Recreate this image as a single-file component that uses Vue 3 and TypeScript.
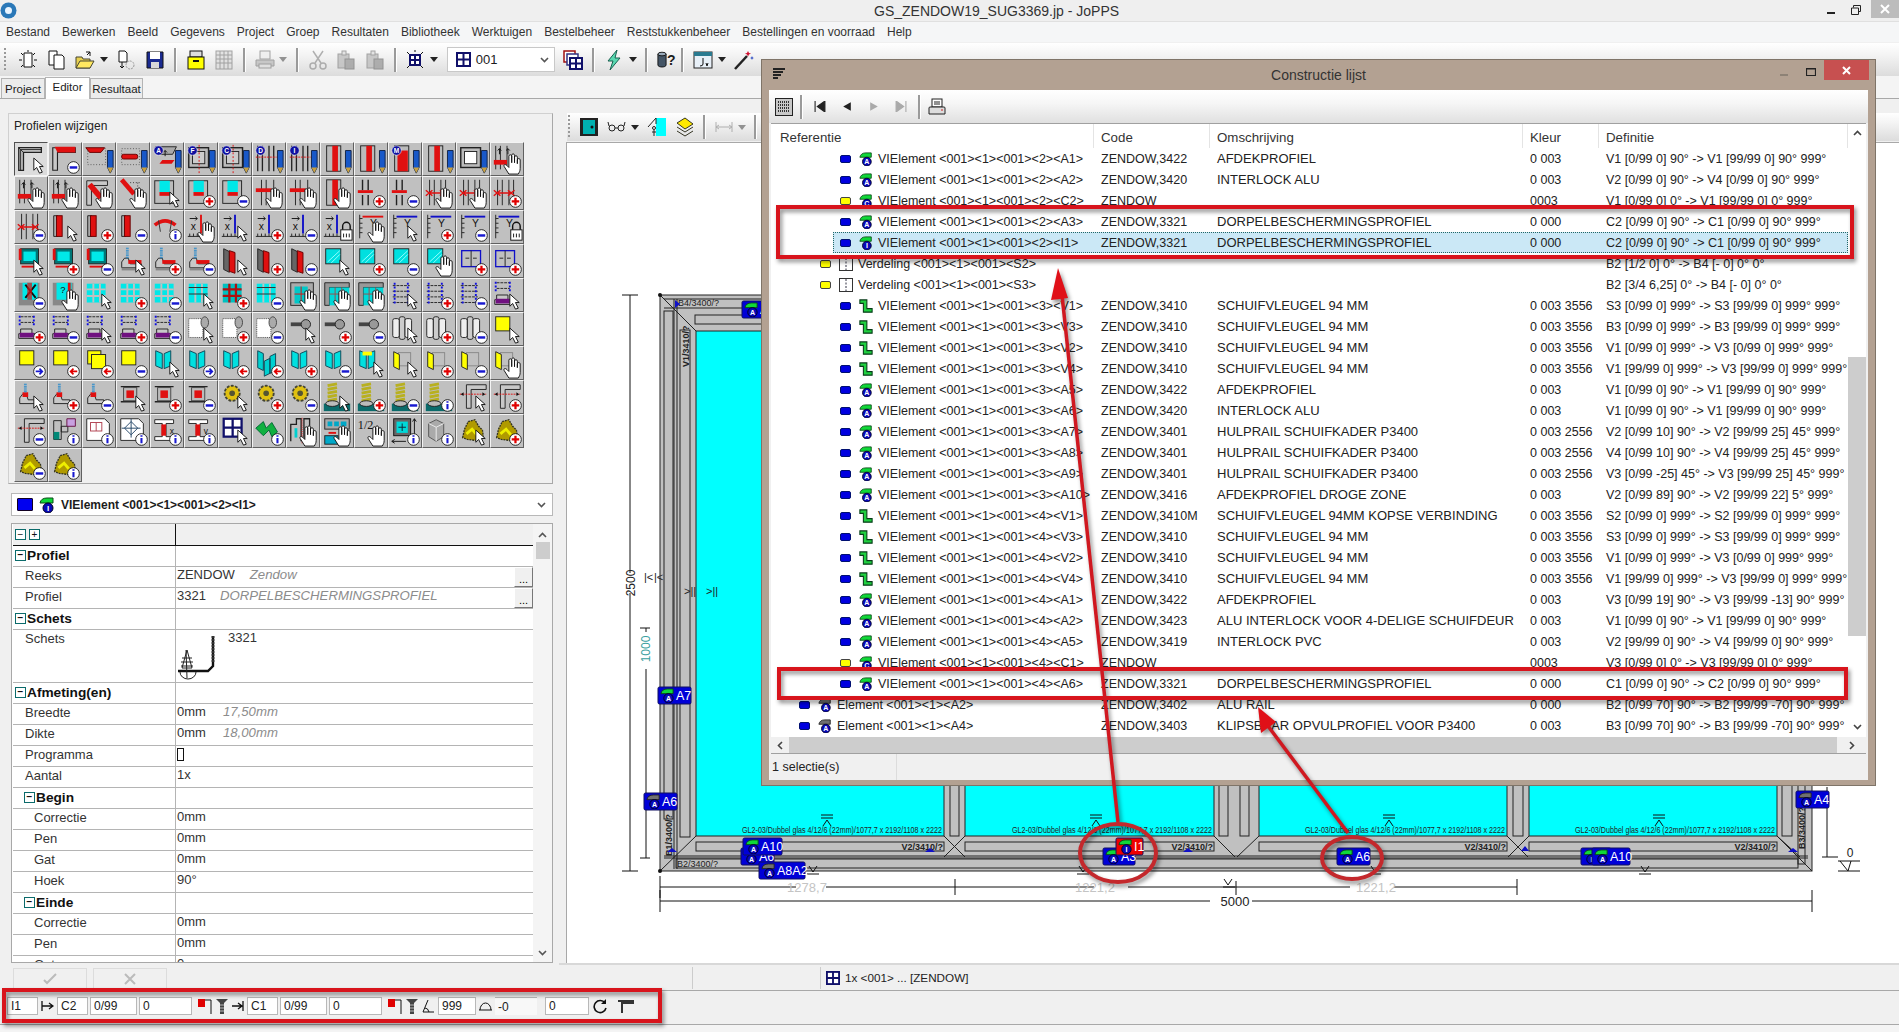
<script setup lang="ts">
// JoPPS editor with the floating "Constructie lijst" window on top

const menu = ['Bestand', 'Bewerken', 'Beeld', 'Gegevens', 'Project', 'Groep', 'Resultaten', 'Bibliotheek', 'Werktuigen', 'Bestelbeheer', 'Reststukkenbeheer', 'Bestellingen en voorraad', 'Help']

// base.overlay.letter per button of the profile palette
const tools = `
corner.cur cRed.minus topRed.pen midRed.pen aRed.pen.A frame.pen.F frame.pen.C pair.pen.D pair.pen.I col.pen col.pen colM.pen.M col.pen frameW.pen pairRed.hand
pairRed.hand pairRed.hand diag.hand diagS.hand glassBox.cur glassBox.plus glassBox.minus cross.hand cross.hand col.hand barT.plus barT.minus xRed.hand xRed.hand xRed.plus
xRed.minus redCol.cur redCol.plus redCol.minus arc.info rulXR.hand rulXB.cur rulXB.plus rulXB.minus rulXB.lock rulYR.hand rulYB.cur rulYB.plus rulYB.minus rulYB.lock
glassFr.cur glassFr.plus glassFr.minus sill.cur sill.plus sill.minus redCols.cur redCols.plus redCols.minus cyan.cur cyan.plus cyan.minus cyan.hand leafB.plus leafB.plus
xglass.minus qglass.hand grid.cur grid.plus grid.minus gridBar.cur gridRed.plus gridBar.minus frGrid.hand corGrid.hand corGrid.hand lines.cur lines.plus lines.minus linesP.cur
linesP.plus linesP.minus linesP.cur linesP.plus linesP.minus roll.cur roll.plus roll.minus handle.cur handle.plus handle.minus hinge.cur hinge.plus hinge.minus yellow.cur
yellow.arrR yellow.arrL yellow2.arrL yellow.minus leaf.cur leaf.arrR leaf.arrL leaf2.arrL leaf.plus leaf.minus leafY.cur door.cur door.plus door.minus door.hand
sillS.cur sillS.plus sillS.minus redBox.cur redBox.plus redBox.minus gear.cur gear.plus gear.minus screw.cur screw.plus screw.minus screw.info cornerD.cur cornerD.plus
cornerD.minus hw.info plan.info plan2.info beamX.info beamY.info window.cur zig.info pairTall.hand panel.hand half.hand frArrow.info cyl.info gold.cur gold.plus
gold.minus gold.info`
  .trim()
  .split(/\s+/)
  .map(s => {
    const [base, over, letter] = s.split('.')
    return { base, over, letter }
  })

interface Prop {
  label: string
  head?: boolean
  sub?: boolean
  value?: string
  note?: string
  noteGap?: number
  btn?: boolean
  sketch?: boolean
  box?: boolean
}

const props: Prop[] = [
  { label: 'Profiel', head: true },
  { label: 'Reeks', value: 'ZENDOW', note: 'Zendow', noteGap: 15, btn: true },
  { label: 'Profiel', value: '3321', note: 'DORPELBESCHERMINGSPROFIEL', noteGap: 14, btn: true },
  { label: 'Schets', head: true },
  { label: 'Schets', sketch: true },
  { label: 'Afmeting(en)', head: true },
  { label: 'Breedte', value: '0mm', note: '17,50mm', noteGap: 17 },
  { label: 'Dikte', value: '0mm', note: '18,00mm', noteGap: 17 },
  { label: 'Programma', box: true },
  { label: 'Aantal', value: '1x' },
  { label: 'Begin', head: true, sub: true },
  { label: 'Correctie', sub: true, value: '0mm' },
  { label: 'Pen', sub: true, value: '0mm' },
  { label: 'Gat', sub: true, value: '0mm' },
  { label: 'Hoek', sub: true, value: '90°' },
  { label: 'Einde', head: true, sub: true },
  { label: 'Correctie', sub: true, value: '0mm' },
  { label: 'Pen', sub: true, value: '0mm' },
  { label: 'Gat', sub: true, value: '0' },
]

interface Row {
  level: number
  dot: 'blue' | 'yellow'
  icon: string
  ref: string
  code?: string
  desc?: string
  kleur?: string
  def: string
  sel?: boolean
}

const vi = (tail: string) => 'VIElement <001><1><001>' + tail
const dorpel = 'DORPELBESCHERMINGSPROFIEL'
const sv = 'SCHUIFVLEUGEL 94 MM'
const hr = 'HULPRAIL SCHUIFKADER P3400'

const rows: Row[] = [
  { level: 3, dot: 'blue', icon: 'A', ref: vi('<2><A1>'), code: 'ZENDOW,3422', desc: 'AFDEKPROFIEL', kleur: '0 003', def: 'V1 [0/99 0] 90° -> V1 [99/99 0] 90° 999°' },
  { level: 3, dot: 'blue', icon: 'A', ref: vi('<2><A2>'), code: 'ZENDOW,3420', desc: 'INTERLOCK ALU', kleur: '0 003', def: 'V2 [0/99 0] 90° -> V4 [0/99 0] 90° 999°' },
  { level: 3, dot: 'yellow', icon: 'C', ref: vi('<2><C2>'), code: 'ZENDOW', kleur: '0003', def: 'V1 [0/99 0] 0° -> V1 [99/99 0] 0° 999°' },
  { level: 3, dot: 'blue', icon: 'A', ref: vi('<2><A3>'), code: 'ZENDOW,3321', desc: dorpel, kleur: '0 000', def: 'C2 [0/99 0] 90° -> C1 [0/99 0] 90° 999°' },
  { level: 3, dot: 'blue', icon: 'I', ref: vi('<2><I1>'), code: 'ZENDOW,3321', desc: dorpel, kleur: '0 000', def: 'C2 [0/99 0] 90° -> C1 [0/99 0] 90° 999°', sel: true },
  { level: 2, dot: 'yellow', icon: 'box', ref: 'Verdeling <001><1><001><S2>', def: 'B2 [1/2 0] 0° -> B4 [- 0] 0° 0°' },
  { level: 2, dot: 'yellow', icon: 'box', ref: 'Verdeling <001><1><001><S3>', def: 'B2 [3/4 6,25] 0° -> B4 [- 0] 0° 0°' },
  { level: 3, dot: 'blue', icon: 'Z', ref: vi('<3><V1>'), code: 'ZENDOW,3410', desc: sv, kleur: '0 003 3556', def: 'S3 [0/99 0] 999° -> S3 [99/99 0] 999° 999°' },
  { level: 3, dot: 'blue', icon: 'Z', ref: vi('<3><V3>'), code: 'ZENDOW,3410', desc: sv, kleur: '0 003 3556', def: 'B3 [0/99 0] 999° -> B3 [99/99 0] 999° 999°' },
  { level: 3, dot: 'blue', icon: 'Z', ref: vi('<3><V2>'), code: 'ZENDOW,3410', desc: sv, kleur: '0 003 3556', def: 'V1 [0/99 0] 999° -> V3 [0/99 0] 999° 999°' },
  { level: 3, dot: 'blue', icon: 'Z', ref: vi('<3><V4>'), code: 'ZENDOW,3410', desc: sv, kleur: '0 003 3556', def: 'V1 [99/99 0] 999° -> V3 [99/99 0] 999° 999°' },
  { level: 3, dot: 'blue', icon: 'A', ref: vi('<3><A5>'), code: 'ZENDOW,3422', desc: 'AFDEKPROFIEL', kleur: '0 003', def: 'V1 [0/99 0] 90° -> V1 [99/99 0] 90° 999°' },
  { level: 3, dot: 'blue', icon: 'A', ref: vi('<3><A6>'), code: 'ZENDOW,3420', desc: 'INTERLOCK ALU', kleur: '0 003', def: 'V1 [0/99 0] 90° -> V1 [99/99 0] 90° 999°' },
  { level: 3, dot: 'blue', icon: 'A', ref: vi('<3><A7>'), code: 'ZENDOW,3401', desc: hr, kleur: '0 003 2556', def: 'V2 [0/99 10] 90° -> V2 [99/99 25] 45° 999°' },
  { level: 3, dot: 'blue', icon: 'A', ref: vi('<3><A8>'), code: 'ZENDOW,3401', desc: hr, kleur: '0 003 2556', def: 'V4 [0/99 10] 90° -> V4 [99/99 25] 45° 999°' },
  { level: 3, dot: 'blue', icon: 'A', ref: vi('<3><A9>'), code: 'ZENDOW,3401', desc: hr, kleur: '0 003 2556', def: 'V3 [0/99 -25] 45° -> V3 [99/99 25] 45° 999°' },
  { level: 3, dot: 'blue', icon: 'A', ref: vi('<3><A10>'), code: 'ZENDOW,3416', desc: 'AFDEKPROFIEL DROGE ZONE', kleur: '0 003', def: 'V2 [0/99 89] 90° -> V2 [99/99 22] 5° 999°' },
  { level: 3, dot: 'blue', icon: 'Z', ref: vi('<4><V1>'), code: 'ZENDOW,3410M', desc: 'SCHUIFVLEUGEL 94MM KOPSE VERBINDING', kleur: '0 003 3556', def: 'S2 [0/99 0] 999° -> S2 [99/99 0] 999° 999°' },
  { level: 3, dot: 'blue', icon: 'Z', ref: vi('<4><V3>'), code: 'ZENDOW,3410', desc: sv, kleur: '0 003 3556', def: 'S3 [0/99 0] 999° -> S3 [99/99 0] 999° 999°' },
  { level: 3, dot: 'blue', icon: 'Z', ref: vi('<4><V2>'), code: 'ZENDOW,3410', desc: sv, kleur: '0 003 3556', def: 'V1 [0/99 0] 999° -> V3 [0/99 0] 999° 999°' },
  { level: 3, dot: 'blue', icon: 'Z', ref: vi('<4><V4>'), code: 'ZENDOW,3410', desc: sv, kleur: '0 003 3556', def: 'V1 [99/99 0] 999° -> V3 [99/99 0] 999° 999°' },
  { level: 3, dot: 'blue', icon: 'A', ref: vi('<4><A1>'), code: 'ZENDOW,3422', desc: 'AFDEKPROFIEL', kleur: '0 003', def: 'V3 [0/99 19] 90° -> V3 [99/99 -13] 90° 999°' },
  { level: 3, dot: 'blue', icon: 'A', ref: vi('<4><A2>'), code: 'ZENDOW,3423', desc: 'ALU INTERLOCK VOOR 4-DELIGE SCHUIFDEUR', kleur: '0 003', def: 'V1 [0/99 0] 90° -> V1 [99/99 0] 90° 999°' },
  { level: 3, dot: 'blue', icon: 'A', ref: vi('<4><A5>'), code: 'ZENDOW,3419', desc: 'INTERLOCK PVC', kleur: '0 003', def: 'V2 [99/99 0] 90° -> V4 [99/99 0] 90° 999°' },
  { level: 3, dot: 'yellow', icon: 'C', ref: vi('<4><C1>'), code: 'ZENDOW', kleur: '0003', def: 'V3 [0/99 0] 0° -> V3 [99/99 0] 0° 999°' },
  { level: 3, dot: 'blue', icon: 'A', ref: vi('<4><A6>'), code: 'ZENDOW,3321', desc: dorpel, kleur: '0 000', def: 'C1 [0/99 0] 90° -> C2 [0/99 0] 90° 999°' },
  { level: 1, dot: 'blue', icon: 'E', ref: 'Element <001><1><A2>', code: 'ZENDOW,3402', desc: 'ALU RAIL', kleur: '0 000', def: 'B2 [0/99 70] 90° -> B2 [99/99 -70] 90° 999°' },
  { level: 1, dot: 'blue', icon: 'E', ref: 'Element <001><1><A4>', code: 'ZENDOW,3403', desc: 'KLIPSBAAR OPVULPROFIEL VOOR P3400', kleur: '0 003', def: 'B3 [0/99 70] 90° -> B3 [99/99 -70] 90° 999°' },
]

const levelPad: Record<number, string> = { 1: 'lv1', 2: 'lv2', 3: 'lv3' }

// labels on the drawing, in paint order
const badges = [
  { x: 742, y: 300, w: 40, label: 'A1', gray: false, red: false, letter: 'A' },
  { x: 658, y: 686, w: 33, label: 'A7', gray: false, red: false, letter: 'A' },
  { x: 644, y: 792, w: 33, label: 'A6', gray: true, red: false, letter: 'A' },
  { x: 741, y: 847, w: 33, label: 'A6', gray: false, red: false, letter: 'A' },
  { x: 743, y: 837, w: 39, label: 'A10', gray: false, red: false, letter: 'A' },
  { x: 759, y: 861, w: 46, label: 'A8A2', gray: true, red: false, letter: 'A' },
  { x: 1103, y: 847, w: 32, label: 'A3', gray: false, red: false, letter: 'A' },
  { x: 1116, y: 837, w: 27, label: 'I1', gray: false, red: true, letter: 'I' },
  { x: 1337, y: 847, w: 33, label: 'A6', gray: false, red: false, letter: 'A' },
  { x: 1581, y: 847, w: 30, label: '', gray: false, red: false, letter: 'I' },
  { x: 1592, y: 847, w: 38, label: 'A10', gray: false, red: false, letter: 'A' },
  { x: 1796, y: 790, w: 33, label: 'A4', gray: true, red: false, letter: 'A' },
]

const glassLabel = 'GL2-03/Dubbel glas 4/12/6 (22mm)/1077,7 x 2192/1108 x 2222'
const panels = [
  { x: 696, w: 248, mark: 827 },
  { x: 965, w: 249, mark: 1096 },
  { x: 1259, w: 248, mark: 1389 },
  { x: 1529, w: 248, mark: 1659 },
]
const downMarks = [813, 1083, 1375, 1645]
</script>

<template>
  <div class="app">
    <!-- shared drawings -->
    <svg class="defs" width="0" height="0">
      <defs>
        <symbol id="b-corner" viewBox="0 0 34 34"><path d="M4 5h24v5H9v19H4z" fill="#c8c8c8" stroke="#222" stroke-width="1.4"/><path d="M6 7h22M6 7v22M4 5l5 5" stroke="#222" fill="none"/></symbol>
        <symbol id="b-cRed" viewBox="0 0 34 34"><path d="M4 5h24v5H9v19H4z" fill="#c8c8c8" stroke="#222" stroke-width="1.2"/><path d="M6 4h22v6H9z" fill="#e01010"/></symbol>
        <symbol id="b-topRed" viewBox="0 0 34 34"><rect x="5" y="6" width="19" height="17" fill="none" stroke="#555" stroke-dasharray="1 2"/><path d="M3 5h20l-4 5H7z" fill="#e01010" stroke="#600"/></symbol>
        <symbol id="b-midRed" viewBox="0 0 34 34"><rect x="5" y="6" width="19" height="17" fill="none" stroke="#555" stroke-dasharray="1 2"/><rect x="5" y="12" width="17" height="5" rx="2" fill="#e01010" stroke="#600"/></symbol>
        <symbol id="b-aRed" viewBox="0 0 34 34"><path d="M5 4h22l-4 8H9z" fill="#aaa" stroke="#222"/><path d="M15 8v6M13 10l2-2 2 2" stroke="#111" fill="none"/><path d="M12 18h13l-3 4H9z" fill="#e01010"/></symbol>
        <symbol id="b-frame" viewBox="0 0 34 34"><rect x="4" y="5" width="21" height="21" fill="#bbb" stroke="#222" stroke-width="1.5"/><rect x="8" y="9" width="13" height="13" fill="#ccc" stroke="#222"/><path d="M15 2v30" stroke="#e01010" stroke-dasharray="2 2"/></symbol>
        <symbol id="b-frameW" viewBox="0 0 34 34"><rect x="4" y="5" width="21" height="21" fill="#bbb" stroke="#222" stroke-width="1.5"/><rect x="8" y="9" width="13" height="13" fill="#fff" stroke="#222"/></symbol>
        <symbol id="b-pair" viewBox="0 0 34 34"><path d="M5 3v27M10 3v27M17 3v27M22 3v27" stroke="#222" stroke-width="1.4"/><path d="M3 15h22" stroke="#e01010" stroke-dasharray="2 1"/></symbol>
        <symbol id="b-pairRed" viewBox="0 0 34 34"><path d="M5 3v25M17 3v25M10 3v25" stroke="#222"/><rect x="3" y="18" width="14" height="5" fill="#e01010"/><path d="M9 6v6M7 8l2-2 2 2M18 6v6M16 8l2-2 2 2" stroke="#111" fill="none"/></symbol>
        <symbol id="b-col" viewBox="0 0 34 34"><rect x="6" y="3" width="15" height="27" fill="#bbb" stroke="#222"/><rect x="12" y="3" width="6" height="27" fill="#e01010"/></symbol>
        <symbol id="b-colM" viewBox="0 0 34 34"><rect x="6" y="3" width="15" height="27" fill="#bbb" stroke="#222"/><rect x="9" y="8" width="11" height="22" fill="#e01010"/></symbol>
        <symbol id="b-diag" viewBox="0 0 34 34"><path d="M4 4h22v5H9v21H4z" fill="#c8c8c8" stroke="#222"/><path d="M7 8l12 14" stroke="#e01010" stroke-width="6"/></symbol>
        <symbol id="b-diagS" viewBox="0 0 34 34"><path d="M5 3l13 15" stroke="#e01010" stroke-width="5"/><path d="M14 6h10M22 6v12" stroke="#333" stroke-dasharray="1 2"/></symbol>
        <symbol id="b-glassBox" viewBox="0 0 34 34"><rect x="4" y="4" width="20" height="24" fill="#bbb" stroke="#222"/><rect x="9" y="4" width="11" height="12" fill="#00e8e8"/><rect x="9" y="16" width="11" height="4" fill="#e01010"/></symbol>
        <symbol id="b-cross" viewBox="0 0 34 34"><path d="M9 3v27M14 3v27M22 3v12" stroke="#222"/><rect x="3" y="12" width="17" height="4" fill="#e01010"/></symbol>
        <symbol id="b-barT" viewBox="0 0 34 34"><path d="M8 3v11M14 3v11M8 19v11M14 19v11" stroke="#222" stroke-width="1.5"/><rect x="3" y="14" width="16" height="3" fill="#e01010"/></symbol>
        <symbol id="b-xRed" viewBox="0 0 34 34"><path d="M7 3v27M12 3v27M19 3v27M24 3v27" stroke="#222"/><path d="M3 14l7 6M10 14l-7 6M18 14l7 6M25 14l-7 6M5 17h18" stroke="#e01010" stroke-width="1.5"/></symbol>
        <symbol id="b-redCol" viewBox="0 0 34 34"><path d="M5 5h4v22H5z" fill="#aaa" stroke="#222"/><rect x="8" y="5" width="6" height="22" fill="#e01010" stroke="#600"/></symbol>
        <symbol id="b-arc" viewBox="0 0 34 34"><path d="M4 15q11-9 22 0" stroke="#e01010" stroke-width="4" fill="none"/><path d="M8 10l2 12M22 10l-2 12" stroke="#333"/></symbol>
        <symbol id="b-rulXR" viewBox="0 0 34 34"><path d="M3 27h20M5 27v-3M9 27v-3M13 27v-3M17 27v-3" stroke="#222" fill="none"/><path d="M17 4v20" stroke="#e01010" stroke-width="2"/><path d="M5 8h8l-2-2M13 8l-2 2" stroke="#111" fill="none"/><text x="6" y="20" font-size="11" fill="#111">x</text></symbol>
        <symbol id="b-rulXB" viewBox="0 0 34 34"><path d="M3 27h20M5 27v-3M9 27v-3M13 27v-3M17 27v-3" stroke="#222" fill="none"/><path d="M17 4v20" stroke="#1010c8" stroke-width="2"/><path d="M5 8h8l-2-2M13 8l-2 2" stroke="#111" fill="none"/><text x="6" y="20" font-size="11" fill="#111">x</text></symbol>
        <symbol id="b-rulYR" viewBox="0 0 34 34"><path d="M5 4v25M5 8h3M5 13h3M5 18h3M5 23h3" stroke="#222" fill="none"/><path d="M8 6h22" stroke="#e01010" stroke-width="2"/><text x="16" y="17" font-size="11" fill="#111">Y</text></symbol>
        <symbol id="b-rulYB" viewBox="0 0 34 34"><path d="M5 4v25M5 8h3M5 13h3M5 18h3M5 23h3" stroke="#222" fill="none"/><path d="M8 6h22" stroke="#1010c8" stroke-width="2"/><text x="16" y="17" font-size="11" fill="#111">Y</text></symbol>
        <symbol id="b-glassFr" viewBox="0 0 34 34"><rect x="6" y="4" width="19" height="16" fill="#077" stroke="#222"/><rect x="9" y="7" width="13" height="10" fill="#00e8e8"/><rect x="4" y="4" width="3" height="12" fill="#e01010"/><rect x="7" y="22" width="17" height="2" fill="#e01010"/></symbol>
        <symbol id="b-sill" viewBox="0 0 34 34"><path d="M5 24v-6l3-4h4l2 6h12v4z" fill="#c8c8c8" stroke="#222"/><path d="M12 16h14v4H12z" fill="#e01010"/><path d="M11 3v11" stroke="#28c" stroke-width="3" stroke-dasharray="1 1"/><rect x="5" y="24" width="18" height="3" fill="#888"/></symbol>
        <symbol id="b-sillS" viewBox="0 0 34 34"><path d="M5 24v-6l3-4h4l2 6h8v4z" fill="#c8c8c8" stroke="#222"/><path d="M8 12h6v5H8z" fill="#e01010"/><path d="M11 3v9" stroke="#28c" stroke-width="3" stroke-dasharray="1 1"/></symbol>
        <symbol id="b-redCols" viewBox="0 0 34 34"><path d="M5 4l6 3v22l-6-3z" fill="#666" stroke="#222"/><path d="M11 6l6 2v22l-6-2z" fill="#e01010" stroke="#600"/></symbol>
        <symbol id="b-cyan" viewBox="0 0 34 34"><rect x="5" y="4" width="16" height="16" fill="#00e0e0" stroke="#222"/><path d="M7 18L20 6M11 19L20 10" stroke="#9ff"/></symbol>
        <symbol id="b-leafB" viewBox="0 0 34 34"><rect x="5" y="6" width="20" height="17" fill="none" stroke="#1010c8" stroke-width="1.4"/><path d="M15 6v17M9 14h4M21 14h-4" stroke="#222"/></symbol>
        <symbol id="b-xglass" viewBox="0 0 34 34"><path d="M4 4h22v24H4z" fill="#888"/><rect x="8" y="4" width="16" height="18" fill="#00e8e8"/><path d="M11 6l11 14M22 6L11 20" stroke="#111" stroke-width="2"/><rect x="13" y="4" width="5" height="18" fill="#e01010" opacity=".7"/></symbol>
        <symbol id="b-qglass" viewBox="0 0 34 34"><path d="M4 4h22v24H4z" fill="#888"/><rect x="8" y="4" width="16" height="18" fill="#00e8e8"/><rect x="20" y="4" width="3" height="18" fill="#e01010"/><text x="12" y="15" font-size="10" fill="#111">?</text></symbol>
        <symbol id="b-grid" viewBox="0 0 34 34"><rect x="4" y="5" width="20" height="20" fill="#00e8e8"/><path d="M11 5v20M18 5v20M4 11h20M4 18h20" stroke="#c0c0c0" stroke-width="2"/></symbol>
        <symbol id="b-gridBar" viewBox="0 0 34 34"><rect x="4" y="5" width="20" height="20" fill="#00e8e8"/><path d="M11 5v20M18 5v20" stroke="#c0c0c0" stroke-width="2"/><path d="M4 9h20M4 16h20" stroke="#333" stroke-width="1.2"/></symbol>
        <symbol id="b-gridRed" viewBox="0 0 34 34"><rect x="4" y="5" width="20" height="20" fill="#00c0c0"/><path d="M11 5v20M18 5v20M4 11h20M4 18h20" stroke="#b01010" stroke-width="2.4"/></symbol>
        <symbol id="b-frGrid" viewBox="0 0 34 34"><rect x="4" y="4" width="24" height="24" fill="#aaa" stroke="#222"/><rect x="8" y="8" width="14" height="18" fill="#00c8c8"/><path d="M15 8v18M8 16h14" stroke="#e01010"/></symbol>
        <symbol id="b-corGrid" viewBox="0 0 34 34"><path d="M4 4h26v5H9v19H4z" fill="#999" stroke="#222"/><rect x="9" y="9" width="21" height="19" fill="#00d8d8"/><path d="M15 9v19M22 9v19M9 16h21" stroke="#e01010" opacity=".7"/></symbol>
        <symbol id="b-lines" viewBox="0 0 34 34"><path d="M4 7h18M4 13h18M4 19h18M4 25h18" stroke="#222" stroke-dasharray="3 1"/><path d="M6 4v24M20 4v24" stroke="#1010e0" stroke-dasharray="2 2" stroke-width="2"/></symbol>
        <symbol id="b-linesP" viewBox="0 0 34 34"><path d="M6 4h14M6 10h14" stroke="#222" stroke-dasharray="3 1"/><path d="M5 3v12M20 3v12" stroke="#1010e0" stroke-dasharray="2 2" stroke-width="2"/><path d="M6 22v-5h12v5h4v5H4v-5z" fill="#c8c8c8" stroke="#222"/><rect x="5" y="21" width="15" height="5" fill="#701080"/></symbol>
        <symbol id="b-roll" viewBox="0 0 34 34"><rect x="4" y="6" width="15" height="20" fill="#fff" stroke="#444" stroke-dasharray="1 1"/><ellipse cx="21" cy="10" rx="4" ry="6" fill="#aaa" stroke="#444"/></symbol>
        <symbol id="b-handle" viewBox="0 0 34 34"><path d="M4 12h14" stroke="#444" stroke-width="4"/><circle cx="20" cy="12" r="5" fill="#999" stroke="#222"/></symbol>
        <symbol id="b-hinge" viewBox="0 0 34 34"><rect x="4" y="6" width="7" height="20" rx="2" fill="#eee" stroke="#222"/><rect x="11" y="4" width="6" height="24" rx="2" fill="#ccc" stroke="#222"/><rect x="17" y="6" width="7" height="20" rx="2" fill="#eee" stroke="#222"/></symbol>
        <symbol id="b-yellow" viewBox="0 0 34 34"><rect x="5" y="4" width="15" height="15" fill="#ff0" stroke="#222"/></symbol>
        <symbol id="b-yellow2" viewBox="0 0 34 34"><rect x="5" y="4" width="14" height="14" fill="#ff0" stroke="#222"/><rect x="9" y="8" width="15" height="15" fill="#ff0" stroke="#222"/></symbol>
        <symbol id="b-leaf" viewBox="0 0 34 34"><path d="M5 4l7 3v16l-7-3zM21 4l-7 3v16l7-3z" fill="#00e0e0" stroke="#145"/></symbol>
        <symbol id="b-leaf2" viewBox="0 0 34 34"><path d="M5 4l6 3v18l-6-3zM18 12l-6 3v16l6-3zM24 7l-6 3v18l6-3z" fill="#00d0d0" stroke="#145"/></symbol>
        <symbol id="b-leafY" viewBox="0 0 34 34"><path d="M5 4l7 3v16l-7-3zM21 4l-7 3v16l7-3z" fill="#00e0e0" stroke="#145"/><path d="M8 5h10v4H8z" fill="#ff0"/></symbol>
        <symbol id="b-door" viewBox="0 0 34 34"><rect x="10" y="6" width="13" height="14" fill="none" stroke="#888"/><path d="M5 5l6 3v16l-6-3z" fill="#ff0" stroke="#222"/></symbol>
        <symbol id="b-redBox" viewBox="0 0 34 34"><path d="M4 6h20M4 22h20" stroke="#222" stroke-width="1.5"/><rect x="7" y="7" width="14" height="14" fill="#bbb" stroke="#444"/><rect x="10" y="10" width="8" height="8" fill="#e01010"/></symbol>
        <symbol id="b-gear" viewBox="0 0 34 34"><circle cx="14" cy="13" r="8" fill="#e0c010" stroke="#443" stroke-width="2" stroke-dasharray="3 1.5"/><circle cx="14" cy="13" r="3" fill="#553"/></symbol>
        <symbol id="b-screw" viewBox="0 0 34 34"><path d="M7 5l10-2M7 9l10-2M7 13l10-2M7 17l10-2M7 21l10-2" stroke="#b8b020" stroke-width="3"/><rect x="3" y="24" width="28" height="8" fill="#0b6b6b"/><ellipse cx="12" cy="24" rx="7" ry="3" fill="#bbb" stroke="#222"/></symbol>
        <symbol id="b-cornerD" viewBox="0 0 34 34"><path d="M10 4h21v5H15v20h-5z" fill="#c8c8c8" stroke="#222"/><path d="M3 14h28" stroke="#e01010" stroke-dasharray="2 1"/><path d="M4 14l3-2v4zM30 14l-3-2v4z" fill="#111"/></symbol>
        <symbol id="b-hw" viewBox="0 0 34 34"><path d="M5 6h8v20H5zM13 12h7v6h-7z" fill="none" stroke="#222"/><rect x="5" y="18" width="6" height="8" fill="#087"/><path d="M19 4h9v8h-9z" fill="#c8a0e0" stroke="#614"/></symbol>
        <symbol id="b-plan" viewBox="0 0 34 34"><path d="M4 4h19l5 5v18H4z" fill="#fff" stroke="#222"/><rect x="8" y="8" width="12" height="9" fill="none" stroke="#b04050"/><path d="M14 8v9" stroke="#b04050"/></symbol>
        <symbol id="b-plan2" viewBox="0 0 34 34"><path d="M4 4h19l5 5v18H4z" fill="#fff" stroke="#222"/><path d="M15 7l7 7-7 7-7-7zM15 4v20M5 14h20" fill="none" stroke="#246"/></symbol>
        <symbol id="b-beamX" viewBox="0 0 34 34"><path d="M4 5h20v4h-8v14h8v4H4v-4h8V9H4z" fill="#fff" stroke="#222"/><path d="M11 10h5v12h-5z" fill="#e01010"/><text x="20" y="20" font-size="9" fill="#111">x</text></symbol>
        <symbol id="b-beamY" viewBox="0 0 34 34"><path d="M4 5h20v4h-8v14h8v4H4v-4h8V9H4z" fill="#fff" stroke="#222"/><path d="M11 10h5v12h-5z" fill="#e01010"/><text x="20" y="20" font-size="9" fill="#111">v</text></symbol>
        <symbol id="b-window" viewBox="0 0 34 34"><rect x="5" y="4" width="19" height="19" fill="#fff" stroke="#10106a" stroke-width="2.4"/><path d="M14.500 4v19M5 13.500h19" stroke="#10106a" stroke-width="2.4"/></symbol>
        <symbol id="b-zig" viewBox="0 0 34 34"><path d="M3 14l8-7 3 7 6-6 6 10-6 5-3-7-6 6z" fill="#10b040" stroke="#063"/></symbol>
        <symbol id="b-pairTall" viewBox="0 0 34 34"><path d="M4 28V10h6V4h5v24M18 28V4h6v24" fill="none" stroke="#222" stroke-width="1.4"/><path d="M8 14v10h3V14z" fill="#00d0d0"/><path d="M16 3v28" stroke="#e01010" stroke-dasharray="1 1"/></symbol>
        <symbol id="b-panel" viewBox="0 0 34 34"><rect x="4" y="4" width="26" height="11" fill="#aaa" stroke="#222"/><path d="M7 7h5v5H7zM14 7h5v5h-5zM21 7h6v5h-6z" fill="#00a8c8"/><rect x="4" y="22" width="14" height="9" fill="#00a8c8" stroke="#222"/><path d="M8 19h8" stroke="#e01010" stroke-width="2"/></symbol>
        <symbol id="b-half" viewBox="0 0 34 34"><text x="3" y="15" font-size="13" font-family="'Liberation Serif', serif" fill="#111">1/2</text></symbol>
        <symbol id="b-frArrow" viewBox="0 0 34 34"><rect x="5" y="4" width="18" height="18" fill="#666" stroke="#111"/><rect x="8" y="7" width="12" height="12" fill="#00d8d8"/><path d="M14 9v8M10 13h8" stroke="#123"/><path d="M27 4v16M25 7l2-3 2 3M3 28h15M6 26l-3 2 3 2" stroke="#111" fill="none"/></symbol>
        <symbol id="b-cyl" viewBox="0 0 34 34"><path d="M6 9l8-4 8 4v14l-8 5-8-5z" fill="#aaa" stroke="#555"/><path d="M6 9l8 4 8-4M14 13v15" stroke="#eee" fill="none"/></symbol>
        <symbol id="b-gold" viewBox="0 0 34 34"><path d="M6 24l2-9 4-8 7-2 4 7 4 4 1 7-8 4-9-1z" fill="#b09a00" stroke="#332" stroke-width="1.4" stroke-dasharray="2 1"/><path d="M10 20l6-5 5 6" stroke="#ee0" stroke-width="3" fill="none"/></symbol>

        <symbol id="o-cur" viewBox="0 0 34 34"><path d="M20 16v13l3-3 3 6 3-1-3-6h4z" fill="#fff" stroke="#111"/></symbol>
        <symbol id="o-plus" viewBox="0 0 34 34"><circle cx="26" cy="26" r="6.200" fill="#fff" stroke="#222"/><path d="M22 26h8M26 22v8" stroke="#e00000" stroke-width="2.400"/></symbol>
        <symbol id="o-minus" viewBox="0 0 34 34"><circle cx="26" cy="26" r="6.200" fill="#fff" stroke="#222"/><path d="M22 26h8" stroke="#1818d0" stroke-width="2.600"/></symbol>
        <symbol id="o-info" viewBox="0 0 34 34"><circle cx="26" cy="26" r="6.200" fill="#fff" stroke="#222"/><path d="M26 21.500v1.500M26 24.500v5.500" stroke="#1818d0" stroke-width="2.200"/></symbol>
        <symbol id="o-arrR" viewBox="0 0 34 34"><circle cx="26" cy="26" r="6.200" fill="#fff" stroke="#222"/><path d="M22 26h7M26 23l3 3-3 3" stroke="#1818d0" stroke-width="1.800" fill="none"/></symbol>
        <symbol id="o-arrL" viewBox="0 0 34 34"><circle cx="26" cy="26" r="6.200" fill="#fff" stroke="#222"/><path d="M30 26h-7M26 23l-3 3 3 3" stroke="#e00000" stroke-width="1.800" fill="none"/></symbol>
        <symbol id="o-hand" viewBox="0 0 34 34"><path d="M19 33l-5-8c-1-2 1-3 3-1l2 2V14c0-2 3-2 3 0v7-8c0-2 3-2 3 0v8-6c0-2 3-2 3 0v7-4c0-2 3-2 3 0v9c0 3-1 4-2 6z" fill="#fff" stroke="#111"/></symbol>
        <symbol id="o-pen" viewBox="0 0 34 34"><path d="M26 8h6v18l-3 6-3-6z" fill="#1858c8" stroke="#124"/><path d="M26 26h6l-3 6z" fill="#c8a040"/></symbol>
        <symbol id="o-lock" viewBox="0 0 34 34"><path d="M23 20v-4a4 4 0 0 1 8 0v4" fill="none" stroke="#111" stroke-width="1.500"/><rect x="21" y="20" width="12" height="11" fill="#fff" stroke="#111"/><path d="M24 24v4M27 24v4M30 24v4" stroke="#111"/></symbol>

        <symbol id="cap-green" viewBox="0 0 16 16"><path d="M1 6q1-5 7-5h6v5z" fill="#10d838" stroke="#0a4a18"/><circle cx="9" cy="11" r="5" fill="#0808b8" stroke="#002"/></symbol>
        <symbol id="cap-gray" viewBox="0 0 16 16"><path d="M1 6q1-5 7-5h6v5z" fill="#707070" stroke="#222"/><circle cx="9" cy="11" r="5" fill="#0808b8" stroke="#002"/></symbol>
        <symbol id="zed" viewBox="0 0 16 16"><path d="M1 1h8v10h6v4H5V5H1z" fill="#20d040" stroke="#073a18" stroke-width="1.200"/></symbol>
        <symbol id="tri" viewBox="0 0 8 5"><path d="M0 0h8L4 5z" fill="#222"/></symbol>
      </defs>
    </svg>

    <header class="titlebar">
      <svg class="app-icon" viewBox="0 0 17 17">
        <circle cx="8.500" cy="8.500" r="8" fill="#2a78b8"/>
        <circle cx="8.500" cy="8.500" r="3.500" fill="#e8f4ff"/>
      </svg>
      <span class="title">GS_ZENDOW19_SUG3369.jp - JoPPS</span>
      <div class="win-btns">
        <svg width="10" height="10" viewBox="0 0 10 10"><path d="M1 8h8" stroke="#222" stroke-width="2"/></svg>
        <svg width="10" height="10" viewBox="0 0 10 10"><path d="M2.500 2.500v-2h7v6h-2M.500 3h7v6.500h-7z" fill="none" stroke="#222"/></svg>
        <div class="close-main">
          <svg width="10" height="10" viewBox="0 0 10 10"><path d="M1 1l8 8M9 1l-8 8" stroke="#fff" stroke-width="2"/></svg>
        </div>
      </div>
    </header>

    <nav class="menubar">
      <span v-for="m in menu" :key="m">{{ m }}</span>
    </nav>

    <div class="toolbar">
      <i class="grip"></i>
      <svg class="ti" viewBox="0 0 20 20"><path d="M6 3h8v14H6z" fill="#fff" stroke="#111"/><path d="M10 0v2M3 3l2 2M17 3l-2 2M1 10h3M19 10h-3M3 17l2-2M17 17l-2-2" stroke="#111"/></svg>
      <svg class="ti" viewBox="0 0 20 20"><path d="M3 1h8v14H3z" fill="#fff" stroke="#111"/><path d="M8 5h8l2 2v12H8z" fill="#fff" stroke="#111"/></svg>
      <svg class="ti" viewBox="0 0 20 20"><path d="M1 7h6l1 2h7v9H1z" fill="#e8d050" stroke="#443"/><path d="M1 18l4-7h14l-4 7z" fill="#ffe860" stroke="#443"/><path d="M12 5l3-3M15 6V2h-4" fill="none" stroke="#111"/></svg>
      <svg class="dd" viewBox="0 0 8 5"><use href="#tri"/></svg>
      <svg class="ti" viewBox="0 0 20 20"><path d="M3 1h6l2 2v9H3z" fill="#fff" stroke="#111"/><path d="M6 12v6M4 16l2 2 2-2" stroke="#111" fill="none"/><circle cx="14" cy="15" r="4" fill="none" stroke="#999" stroke-dasharray="2 1"/></svg>
      <svg class="ti" viewBox="0 0 20 20"><path d="M2 2h16v16H2z" fill="#1a2a90" stroke="#111"/><rect x="5" y="2" width="10" height="7" fill="#fff"/><rect x="6" y="12" width="8" height="6" fill="#d8d8d8"/></svg>
      <i class="sep"></i>
      <svg class="ti" viewBox="0 0 20 20"><rect x="4" y="1" width="12" height="6" fill="#ddd" stroke="#111"/><rect x="2" y="7" width="16" height="12" fill="#ff0" stroke="#111"/><path d="M7 11h6" stroke="#111" stroke-width="2"/></svg>
      <svg class="ti muted" viewBox="0 0 20 20"><rect x="2" y="1" width="16" height="18" fill="#ddd" stroke="#888"/><path d="M2 5h16M2 9h16M2 13h16M6 1v18M10 1v18M14 1v18" stroke="#888"/></svg>
      <i class="sep"></i>
      <svg class="ti muted" viewBox="0 0 20 20"><rect x="5" y="1" width="10" height="8" fill="#eee" stroke="#888"/><path d="M1 16v-6h18v6z" fill="#bbb" stroke="#888"/><rect x="4" y="14" width="12" height="4" fill="#ddd" stroke="#888"/></svg>
      <svg class="dd faint" viewBox="0 0 8 5"><use href="#tri"/></svg>
      <i class="sep"></i>
      <svg class="ti muted" viewBox="0 0 20 20"><path d="M5 1l8 12M15 1L7 13" stroke="#999" stroke-width="1.500"/><circle cx="5" cy="16" r="3" fill="none" stroke="#999" stroke-width="1.500"/><circle cx="15" cy="16" r="3" fill="none" stroke="#999" stroke-width="1.500"/></svg>
      <svg class="ti muted" viewBox="0 0 20 20"><rect x="2" y="4" width="11" height="14" fill="#bbb" stroke="#888"/><rect x="6" y="1" width="4" height="4" fill="#ddd" stroke="#888"/><rect x="9" y="9" width="9" height="10" fill="#999" stroke="#777"/></svg>
      <svg class="ti muted" viewBox="0 0 20 20"><rect x="2" y="4" width="11" height="14" fill="#bbb" stroke="#888"/><rect x="6" y="1" width="4" height="4" fill="#ddd" stroke="#888"/><rect x="9" y="9" width="9" height="10" fill="#999" stroke="#777"/></svg>
      <i class="sep"></i>
      <svg class="ti" viewBox="0 0 20 20"><rect x="5" y="5" width="10" height="10" fill="#fff" stroke="#10106a" stroke-width="2"/><path d="M10 5v10M5 10h10" stroke="#10106a" stroke-width="2"/><path d="M10 0v2M2 2l2 2M18 2l-2 2M2 18l2-2M18 18l-2-2" stroke="#111"/></svg>
      <svg class="dd" viewBox="0 0 8 5"><use href="#tri"/></svg>
      <div class="combo">
        <svg width="15" height="15" viewBox="0 0 15 15"><rect x="1" y="1" width="13" height="13" fill="#fff" stroke="#10106a" stroke-width="2"/><path d="M7.500 1v13M1 7.500h13" stroke="#10106a" stroke-width="2"/></svg>
        <span>001</span>
        <svg class="chev" width="9" height="6" viewBox="0 0 9 6"><path d="M1 1l3.500 3.500L8 1" fill="none" stroke="#555" stroke-width="1.600"/></svg>
      </div>
      <svg class="ti" viewBox="0 0 20 20"><rect x="1" y="1" width="11" height="11" fill="#fff" stroke="#a01010" stroke-width="1.500"/><rect x="4" y="4" width="11" height="11" fill="#fff" stroke="#303080" stroke-width="1.500"/><rect x="7" y="8" width="12" height="11" fill="#fff" stroke="#10106a" stroke-width="2"/><path d="M13 8v11M7 13.500h12" stroke="#10106a" stroke-width="2"/></svg>
      <i class="sep"></i>
      <svg class="ti" viewBox="0 0 20 20"><path d="M13 0L4 11h5l-3 9 10-12h-5z" fill="#58d8b0" stroke="#186050"/></svg>
      <svg class="dd" viewBox="0 0 8 5"><use href="#tri"/></svg>
      <i class="sep"></i>
      <span class="db-help">
        <svg width="10" height="17" viewBox="0 0 11 18"><path d="M1 3v12c0 3 9 3 9 0V3z" fill="#456" stroke="#111"/><ellipse cx="5.500" cy="3" rx="4.500" ry="2" fill="#9ab" stroke="#111"/></svg>
        <b>?</b>
      </span>
      <i class="sep"></i>
      <svg class="ti" viewBox="0 0 20 20"><rect x="1" y="2" width="18" height="16" fill="#e8f0f8" stroke="#222"/><rect x="1" y="2" width="18" height="4" fill="#2a7a90"/><path d="M10 8v6q0 2-3 2M13 13l1 3 1-3" fill="none" stroke="#111"/></svg>
      <svg class="dd" viewBox="0 0 8 5"><use href="#tri"/></svg>
      <svg class="ti" viewBox="0 0 20 20"><path d="M1 19L13 6" stroke="#222" stroke-width="2.500"/><path d="M14 1l1 2 2 .5-2 1-1 2-1-2-2-1 2-.5z" fill="#d01030"/><path d="M18 6l.6 1.500 1.400.5-1.400.5L18 10l-.6-1.500L16 8l1.400-.5z" fill="#2040c0"/></svg>
    </div>

    <div class="tabs">
      <span class="tab t44">Project</span>
      <span class="tab active">Editor</span>
      <span class="tab t53">Resultaat</span>
    </div>

    <div class="workspace">
      <aside class="left">
        <section class="palette">
          <h4>Profielen wijzigen</h4>
          <div class="tool-grid">
            <div v-for="(t, i) in tools" :key="i" class="tool" :class="{ pressed: i === 0 }">
              <svg viewBox="0 0 34 34" width="32" height="32">
                <use :href="'#b-' + t.base" width="34" height="34"/>
                <g v-if="t.letter">
                  <circle cx="8" cy="8" r="5" fill="#1010a0" stroke="#fff" stroke-width=".6"/>
                  <text x="8" y="10.500" text-anchor="middle" font-size="7" font-weight="700" fill="#fff">{{ t.letter }}</text>
                </g>
                <use :href="'#o-' + t.over" width="34" height="34"/>
              </svg>
            </div>
          </div>
        </section>

        <div class="picker">
          <i class="swatch"></i>
          <svg width="16" height="16" viewBox="0 0 16 16">
            <use href="#cap-green" width="16" height="16"/>
            <text x="9" y="14" text-anchor="middle" font-size="8" font-weight="700" fill="#fff">I</text>
          </svg>
          <b>VIElement &lt;001&gt;&lt;1&gt;&lt;001&gt;&lt;2&gt;&lt;I1&gt;</b>
          <svg class="chev" width="9" height="6" viewBox="0 0 9 6"><path d="M1 1l3.500 3.500L8 1" fill="none" stroke="#555" stroke-width="1.600"/></svg>
        </div>

        <div class="grid-box">
          <div class="grid-main">
            <div class="grid-head">
              <div class="gh-left"><i class="box">−</i><i class="box">+</i></div>
            </div>
            <div class="grid-body">
              <div
                v-for="(p, i) in props"
                :key="i"
                class="prow"
                :class="{ tall: p.sketch }"
              >
                <div class="plabel" :class="{ sub: p.sub, head: p.head }">
                  <i v-if="p.head" class="box">−</i>
                  <span>{{ p.label }}</span>
                </div>
                <div class="pvalue">
                  <span v-if="p.value">{{ p.value }}</span>
                  <em v-if="p.note" :style="{ marginLeft: p.noteGap + 'px' }">{{ p.note }}</em>
                  <i v-if="p.box" class="prog"></i>
                  <template v-if="p.sketch">
                    <svg class="sk" width="42" height="46" viewBox="0 0 42 46">
                      <path d="M36 2v30l-5 5H1" fill="none" stroke="#111" stroke-width="2.400"/>
                      <path d="M34 3h4M34 6h4M34 9h4M34 12h4M34 15h4M34 18h4M34 21h4M34 24h4M34 27h4" stroke="#555"/>
                      <path d="M9 16l1 28M10 16l-5 18h10zM5 24h10M4 28h12M4 32h12" fill="none" stroke="#222"/>
                      <path d="M3 38a8 7 0 0 0 16 0" fill="none" stroke="#222"/>
                    </svg>
                    <span class="sk-code">3321</span>
                  </template>
                  <button v-if="p.btn" class="dots" type="button">...</button>
                </div>
              </div>
            </div>
          </div>
          <div class="grid-scroll">
            <svg width="9" height="6" viewBox="0 0 9 6"><path d="M1 5l3.500-3.500L8 5" fill="none" stroke="#555" stroke-width="1.600"/></svg>
            <i class="thumb"></i>
            <svg class="down" width="9" height="6" viewBox="0 0 9 6"><path d="M1 1l3.500 3.500L8 1" fill="none" stroke="#555" stroke-width="1.600"/></svg>
          </div>
        </div>

        <div class="grid-actions">
          <button type="button">
            <svg width="16" height="12" viewBox="0 0 16 12"><path d="M2 7l3 3 9-9" fill="none" stroke="#bbb" stroke-width="2"/></svg>
          </button>
          <button type="button">
            <svg width="12" height="12" viewBox="0 0 12 12"><path d="M1 1l10 10M11 1L1 11" fill="none" stroke="#bbb" stroke-width="2"/></svg>
          </button>
        </div>
      </aside>

      <main class="right">
        <div class="sheet-top">
          <div class="sheet-tools">
            <i class="grip"></i>
            <svg class="ti" viewBox="0 0 20 20"><rect x="1" y="1" width="18" height="18" fill="#222"/><rect x="4" y="3" width="12" height="14" fill="#00b0b0"/><circle cx="13" cy="10" r="1.500" fill="#111"/></svg>
            <svg class="ti" viewBox="0 0 20 20"><circle cx="5" cy="11" r="3" fill="none" stroke="#222"/><circle cx="14" cy="11" r="3" fill="none" stroke="#222"/><path d="M8 11h3M2 9L1 5M17 9l1-4" stroke="#222" fill="none"/></svg>
            <svg class="dd" viewBox="0 0 8 5"><use href="#tri"/></svg>
            <svg class="ti" viewBox="0 0 20 20"><rect x="9" y="1" width="10" height="18" fill="#00ffff"/><path d="M1 10L9 1v6" stroke="#222" fill="none"/><circle cx="7" cy="11" r="1.500" fill="none" stroke="#222"/><path d="M7 13v6M5 15h4" stroke="#222"/></svg>
            <svg class="ti" viewBox="0 0 20 20"><path d="M2 6l8-5 8 6-8 5z" fill="#ffe800" stroke="#332"/><path d="M2 10l8 5 8-5M2 14l8 5 8-5" fill="none" stroke="#332"/></svg>
            <i class="sep"></i>
            <svg class="ti muted" viewBox="0 0 20 20"><path d="M2 5v10M18 5v10M2 10h16M5 8l-3 2 3 2M15 8l3 2-3 2" fill="none" stroke="#999"/></svg>
            <svg class="dd faint" viewBox="0 0 8 5"><use href="#tri"/></svg>
            <i class="sep"></i>
          </div>
        </div>

        <div class="sheet">
          <svg class="drawing" width="1332" height="821" viewBox="567 142 1332 821">
            <!-- frame -->
            <rect x="660" y="294" width="1152" height="576" fill="#c0c0c0" stroke="#222"/>
            <rect v-for="p in panels" :key="p.x" :x="p.x" y="330" :width="p.w" height="505" fill="#00ffff" stroke="#222"/>
            <g fill="none" stroke="#222">
              <rect x="664" y="310" width="9" height="508"/>
              <rect x="680" y="329" width="10" height="507"/>
              <path d="M674 298v570M677 298v570M664 298h1144M664 307h1144M664 855h1144M664 857h1144"/>
              <rect x="695" y="314" width="1082" height="9"/>
              <rect x="676" y="858" width="1122" height="9"/>
              <rect x="950" y="330" width="9" height="505"/>
              <rect x="1219" y="330" width="9" height="505"/>
              <rect x="1240" y="330" width="9" height="505"/>
              <rect x="1513" y="330" width="10" height="505"/>
              <rect x="1782" y="330" width="10" height="505"/>
              <rect x="1798" y="298" width="7" height="565"/>
              <path d="M660 294l36 36M660 870l36-35M1812 870l-35-35M1812 294l-35 36M965 835l-21 21M944 835l21 21M1214 835l21 21M1259 835l-22 21M1507 835l21 21M1529 835l-21 21M1777 835l23 21"/>
            </g>
            <rect v-for="p in panels" :key="'r' + p.x" :x="p.x" y="841" :width="p.w" height="9" fill="#c0c0c0" stroke="#222"/>
            <g font-family="'Liberation Sans', sans-serif" fill="#222">
              <text v-for="p in panels" :key="'g' + p.x" :x="p.x + p.w - 2" y="832" text-anchor="end" font-size="9.200" textLength="200" lengthAdjust="spacingAndGlyphs">{{ glassLabel }}</text>
              <text v-for="p in panels" :key="'v' + p.x" :x="p.x + p.w - 1" y="849" text-anchor="end" font-size="9" font-weight="700">V2/3410/?</text>
              <text x="678" y="305" font-size="9">B4/3400/?</text>
              <text x="677" y="866" font-size="9">B2/3400/?</text>
              <text transform="translate(689 366) rotate(-90)" font-size="9" font-weight="700">V1/3410/?</text>
              <text transform="translate(672 855) rotate(-90)" font-size="9" font-weight="700">B1/3400/?</text>
              <text transform="translate(1805 848) rotate(-90)" font-size="9" font-weight="700">B3/3400/?</text>
              <text x="684" y="594" font-size="11">&gt;||</text>
              <text x="706" y="594" font-size="11">&gt;||</text>
              <text x="644" y="580" font-size="11">|&lt;</text>
              <text x="654" y="580" font-size="11">|&lt;</text>
            </g>
            <g v-for="p in panels" :key="'m' + p.x" fill="none" stroke="#111">
              <path :d="`M${p.mark - 6} 814h12M${p.mark - 6} 817h12M${p.mark - 4} 825l4-6 4 6`"/>
            </g>
            <g v-for="x in downMarks" :key="x" fill="none" stroke="#111">
              <path :d="`M${x - 4} 865l4 6 4-6M${x - 6} 873h12`"/>
            </g>
            <path d="M1224 878l4 6 4-6M1223 886h12" fill="none" stroke="#111"/>

            <!-- small anchors -->
            <g fill="#1010c8">
              <path d="M675 299l5 4-5 4zM672 847l5 4h-10zM930 847l5 4h-10zM1188 847l5 4h-10zM1525 845l4 5h-8zM1793 847l5 4h-10z"/>
            </g>
            <circle cx="660" cy="870" r="2" fill="#111"/>
            <circle cx="660" cy="294" r="2" fill="#111"/>

            <!-- dimensions -->
            <g fill="none" stroke="#111">
              <path d="M630 294v278M630 592v278M622 294h16M622 870h16"/>
              <path d="M646 627v4M646 668v189M640 627h10M640 857h10"/>
              <path d="M660 886h136M826 886h268M1128 886h222M1394 886h123M660 875v22M955 878v16M1236 880v14M1517 878v16"/>
              <path d="M660 900h550M1252 900h560M660 889v22M1812 889v22"/>
              <path d="M1827 786v70M1822 856h16M1838 860h22M1840 860l8 10 3-10M1838 870h22"/>
            </g>
            <g font-family="'Liberation Sans', sans-serif" font-size="13" fill="#222" text-anchor="middle">
              <text transform="translate(635 582) rotate(-90)" font-size="12">2500</text>
              <text transform="translate(650 648) rotate(-90)" font-size="12" fill="#3aa0a0">1000</text>
              <text x="807" y="891" fill="#c4c4c4">1278,7</text>
              <text x="1095" y="891" fill="#c4c4c4">1221,2</text>
              <text x="1376" y="891" fill="#c4c4c4">1221,2</text>
              <text x="1235" y="905">5000</text>
              <text x="1850" y="856" font-size="12">0</text>
            </g>

            <!-- labels -->
            <g v-for="(b, i) in badges" :key="i" font-family="'Liberation Sans', sans-serif">
              <rect :x="b.x" :y="b.y" :width="b.w" height="17" rx="1.500" :fill="b.red ? '#ee0000' : '#0000d8'" stroke="#101060"/>
              <use :href="b.gray ? '#cap-gray' : '#cap-green'" :x="b.x + 2" :y="b.y + 1" width="15" height="15"/>
              <text :x="b.x + 10.500" :y="b.y + 14" text-anchor="middle" font-size="7" font-weight="700" fill="#fff">{{ b.letter }}</text>
              <text :x="b.x + 18" :y="b.y + 13" font-size="12.500" fill="#fff">{{ b.label }}</text>
            </g>
          </svg>
        </div>

        <div class="status">
          <i class="st-a"></i>
          <i class="st-b"></i>
          <svg width="14" height="14" viewBox="0 0 15 15"><rect x="1" y="1" width="13" height="13" fill="#fff" stroke="#10106a" stroke-width="2"/><path d="M7.500 1v13M1 7.500h13" stroke="#10106a" stroke-width="2"/></svg>
          <span>1x &lt;001&gt; ... [ZENDOW]</span>
        </div>
      </main>
    </div>

    <div class="cmdbar">
      <input class="f w31" value="I1" readonly>
      <svg class="ci" width="13" height="12" viewBox="0 0 13 12"><path d="M1 1v10M1 6h11M8 3l4 3-4 3" fill="none" stroke="#111" stroke-width="1.300"/></svg>
      <input class="f w31" value="C2" readonly>
      <input class="f w47" value="0/99" readonly>
      <input class="f w53" value="0" readonly>
      <svg class="ci" width="14" height="15" viewBox="0 0 14 15"><rect x="0" y="0" width="7" height="8" fill="#e00000"/><path d="M7 1h6v14" fill="none" stroke="#111"/></svg>
      <svg class="ci" width="12" height="15" viewBox="0 0 12 15"><path d="M0 0h12L8 4v11H4V4z" fill="#444"/><path d="M4 6h4M4 9h4M4 12h4" stroke="#bbb"/></svg>
      <svg class="ci" width="12" height="12" viewBox="0 0 12 12"><path d="M0 6h10M6 3l4 3-4 3M11 1v10" fill="none" stroke="#111" stroke-width="1.300"/></svg>
      <input class="f w31" value="C1" readonly>
      <input class="f w47" value="0/99" readonly>
      <input class="f w53" value="0" readonly>
      <svg class="ci" width="14" height="15" viewBox="0 0 14 15"><rect x="0" y="0" width="7" height="8" fill="#e00000"/><path d="M7 1h6v14" fill="none" stroke="#111"/></svg>
      <svg class="ci" width="12" height="15" viewBox="0 0 12 15"><path d="M0 0h12L8 4v11H4V4z" fill="#444"/><path d="M4 6h4M4 9h4M4 12h4" stroke="#bbb"/></svg>
      <svg class="ci" width="13" height="13" viewBox="0 0 13 13"><path d="M6 0L1 12h11M3 8q3 0 4 4" fill="none" stroke="#111"/></svg>
      <input class="f w38" value="999" readonly>
      <svg class="ci" width="13" height="9" viewBox="0 0 13 9"><path d="M0 8h13M1 8a5.500 7 0 0 1 11 0" fill="none" stroke="#111"/></svg>
      <input class="f w42 flat" value="-0" readonly>
      <input class="f w44" value="0" readonly>
      <svg class="ci" width="16" height="16" viewBox="0 0 16 16"><path d="M13 5a6 6 0 1 0 1 5" fill="none" stroke="#111" stroke-width="1.600"/><path d="M14 1v5H9z" fill="#111"/></svg>
      <svg class="ci end" width="16" height="14" viewBox="0 0 16 14"><path d="M0 1h16v2H0zM3 3v11h2V5h11V3z" fill="#333"/></svg>
    </div>
    <div class="foot"></div>

    <!-- floating window -->
    <section class="float">
      <div class="float-title">
        <svg class="float-icon" width="12" height="12" viewBox="0 0 12 12"><path d="M0 1h12M0 4h10M0 7h8M0 10h5" stroke="#222" stroke-width="2"/></svg>
        <span>Constructie lijst</span>
        <div class="float-btns">
          <svg width="10" height="10" viewBox="0 0 10 10"><path d="M1 8h8" stroke="#8d8276" stroke-width="2"/></svg>
          <svg width="10" height="10" viewBox="0 0 10 10"><path d="M.500 1.500h9v7h-9zM.500 2h9" fill="none" stroke="#222" stroke-width="1.200"/></svg>
          <div class="float-close">
            <svg width="9" height="9" viewBox="0 0 9 9"><path d="M1 1l7 7M8 1L1 8" stroke="#fff" stroke-width="2"/></svg>
          </div>
        </div>
      </div>

      <div class="float-body">
        <div class="float-tools">
          <svg width="18" height="18" viewBox="0 0 18 18"><rect x=".5" y=".5" width="17" height="17" fill="#c8c8c8" stroke="#222"/><path d="M3 4h12M3 7h12M3 10h12M3 13h12" stroke="#333" stroke-dasharray="1 1" stroke-width="2"/></svg>
          <i class="sep"></i>
          <svg class="nav" viewBox="0 0 11 10"><path d="M1 0v10M10 0v10L3 5z" fill="#222" stroke="#222"/></svg>
          <svg class="nav" viewBox="0 0 11 10"><path d="M9 1v8L2 5z" fill="#222"/></svg>
          <svg class="nav" viewBox="0 0 11 10"><path d="M2 1v8l7-4z" fill="#aaa"/></svg>
          <svg class="nav" viewBox="0 0 11 10"><path d="M10 0v10M1 0v10l7-5z" fill="#aaa" stroke="#aaa"/></svg>
          <i class="sep"></i>
          <svg width="18" height="18" viewBox="0 0 18 18"><rect x="4" y="1" width="10" height="8" fill="#fff" stroke="#222"/><path d="M6 4h6M6 6h6" stroke="#222"/><path d="M1 16v-6q0-1 1-1h14q1 0 1 1v6z" fill="#ddd" stroke="#222"/><path d="M13 12h2" stroke="#c22"/></svg>
        </div>

        <div class="list-wrap">
          <div class="list-main">
            <div class="list-head list-cols">
              <span>Referentie</span><span>Code</span><span>Omschrijving</span><span>Kleur</span><span>Definitie</span>
            </div>
            <div class="list-rows">
              <div
                v-for="(r, i) in rows"
                :key="i"
                class="list-row list-cols"
                :class="{ sel: r.sel }"
              >
                <div class="ref" :class="levelPad[r.level]">
                  <i class="dot" :class="r.dot"></i>
                  <svg v-if="r.icon === 'box'" class="tree-ic" viewBox="0 0 14 14">
                    <rect x=".5" y=".5" width="13" height="13" fill="#fff" stroke="#333"/>
                    <path d="M7 1v12" stroke="#334" stroke-dasharray="2 1.500"/>
                  </svg>
                  <svg v-else class="tree-ic" viewBox="0 0 16 16">
                    <use v-if="r.icon === 'Z'" href="#zed" width="16" height="16"/>
                    <template v-else>
                      <use :href="r.icon === 'E' ? '#cap-gray' : '#cap-green'" width="16" height="16"/>
                      <text x="9" y="14" text-anchor="middle" font-size="8" font-weight="700" fill="#fff">{{ r.icon === 'E' ? 'A' : r.icon }}</text>
                    </template>
                  </svg>
                  <span>{{ r.ref }}</span>
                </div>
                <span class="cell">{{ r.code }}</span>
                <span class="cell wide">{{ r.desc }}</span>
                <span class="cell">{{ r.kleur }}</span>
                <span class="cell">{{ r.def }}</span>
              </div>
            </div>
          </div>
          <div class="list-vscroll">
            <svg width="9" height="6" viewBox="0 0 9 6"><path d="M1 5l3.500-3.500L8 5" fill="none" stroke="#444" stroke-width="1.600"/></svg>
            <i class="vthumb"></i>
            <svg class="down" width="9" height="6" viewBox="0 0 9 6"><path d="M1 1l3.500 3.500L8 1" fill="none" stroke="#444" stroke-width="1.600"/></svg>
          </div>
        </div>

        <div class="list-hscroll">
          <svg width="6" height="9" viewBox="0 0 6 9"><path d="M5 1L1.500 4.500 5 8" fill="none" stroke="#444" stroke-width="1.600"/></svg>
          <i class="hthumb"></i>
          <svg width="6" height="9" viewBox="0 0 6 9"><path d="M1 1l3.500 3.500L1 8" fill="none" stroke="#444" stroke-width="1.600"/></svg>
        </div>
        <div class="float-status">
          <span>1 selectie(s)</span>
        </div>
      </div>
    </section>

    <!-- annotations -->
    <svg class="marks" width="1899" height="1032" viewBox="0 0 1899 1032">
      <g fill="none" stroke="#d8141c" stroke-width="4">
        <rect x="778" y="207" width="1074" height="50"/>
        <rect x="779" y="669" width="1067" height="29"/>
        <rect x="4" y="990" width="656" height="31"/>
      </g>
      <g fill="none" stroke="#c4282c" stroke-width="4">
        <ellipse cx="1118" cy="853" rx="38" ry="29"/>
        <ellipse cx="1352" cy="858" rx="30" ry="21"/>
      </g>
      <g stroke="#d01820" stroke-width="3.500" fill="#e01018">
        <path d="M1118 822L1062 295"/>
        <path d="M1058 268l-7 32 17-2z" stroke="none"/>
        <path d="M1348 833l-80-107"/>
        <path d="M1258 707l3 26 15-11z" stroke="none"/>
      </g>
    </svg>
  </div>
</template>

<style scoped>
.app {
  position: relative;
  width: 1899px;
  height: 1032px;
  overflow: hidden;
  display: flex;
  flex-direction: column;
  background: #f0f0f0;
  color: #1c1c1c;
  font-family: "Liberation Sans", Arial, sans-serif;
  font-size: 13px;
}

.defs { position: absolute; }

.titlebar {
  height: 22px;
  flex: none;
  display: flex;
  align-items: center;
  background: #efefef;
  border-bottom: 1px solid #e0e0e0;
  box-sizing: border-box;
}
.app-icon { width: 17px; height: 17px; }
.title {
  margin-left: 857px;
  font-size: 14px;
  color: #333;
  white-space: nowrap;
}
.win-btns {
  margin-left: auto;
  display: flex;
  align-items: flex-start;
  gap: 15px;
  height: 100%;
}
.win-btns > svg { margin-top: 5px; }
.close-main {
  width: 28px;
  height: 18px;
  margin-left: -5px;
  background: #bcbcbc;
  display: flex;
  align-items: center;
  justify-content: center;
}

.menubar {
  height: 20px;
  flex: none;
  display: flex;
  align-items: center;
  gap: 12px;
  padding-left: 6px;
  background: #f5f6f7;
  font-size: 12px;
  color: #333;
}

.toolbar {
  height: 33px;
  margin-top: 1px;
  flex: none;
  display: flex;
  align-items: center;
  gap: 8.700px;
  padding-left: 4px;
  background: linear-gradient(#fff, #f4f4f4 35%, #dcdcdc);
}
.grip {
  width: 2px;
  height: 24px;
  margin-right: 3px;
  background-image: linear-gradient(#999 50%, transparent 50%);
  background-size: 2px 4px;
}
.ti { width: 20px; height: 20px; flex: none; }
.muted { opacity: .75; }
.dd { width: 8px; height: 5px; margin-left: -4px; flex: none; }
.faint { opacity: .45; }
.sep { width: 2px; height: 24px; background: #9a9a9a; border-right: 1px solid #fff; flex: none; }
.combo {
  width: 108px;
  height: 25px;
  flex: none;
  box-sizing: border-box;
  display: flex;
  align-items: center;
  gap: 5px;
  padding: 0 5px 0 8px;
  background: #fff;
  border: 1px solid #c8c8c8;
  font-size: 13px;
}
.chev { margin-left: auto; flex: none; }
.db-help { display: inline-flex; align-items: center; gap: 0; margin-right: -3px; }
.db-help b { font-size: 14px; }

.tabs {
  height: 23px;
  flex: none;
  display: flex;
  align-items: flex-end;
  padding-left: 1px;
  border-bottom: 1px solid #a8a8a8;
  box-sizing: border-box;
  background: #f4f4f4;
}
.tab {
  height: 20px;
  justify-content: center;
  display: flex;
  align-items: center;
  font-size: 11.500px;
  background: #ececec;
  border: 1px solid #b4b4b4;
  border-bottom: none;
  box-sizing: border-box;
}
.t44 { width: 44px; }
.t53 { width: 53px; }
.tab.active {
  width: 45px;
  height: 22px;
  padding-bottom: 3px;
  background: #fff;
  margin-bottom: -1px;
}

.workspace { height: 892px; flex: none; display: flex; }

.left {
  width: 559px;
  flex: none;
  box-sizing: border-box;
  padding: 14px 6px 0 8px;
  display: flex;
  flex-direction: column;
}
.palette {
  height: 371px;
  flex: none;
  box-sizing: border-box;
  border: 1px solid #d0d0d0;
  border-bottom-color: #a8a8a8;
  border-right-color: #a8a8a8;
  padding: 0 0 0 5px;
}
.palette h4 {
  margin: 0;
  height: 28px;
  padding-bottom: 5px;
  box-sizing: border-box;
  display: flex;
  align-items: center;
  font-size: 12px;
  font-weight: 400;
  color: #222;
}
.tool-grid {
  display: grid;
  grid-template-columns: repeat(15, 34px);
  grid-auto-rows: 34px;
}
.tool {
  box-sizing: border-box;
  width: 34px;
  height: 34px;
  background: #c0c0c0;
  border: 1px solid;
  border-color: #f4f4f4 #606060 #606060 #f4f4f4;
}
.tool svg { display: block; font-family: "Liberation Sans", sans-serif; }
.tool.pressed { background: #dcdcdc; border-color: #505050 #f4f4f4 #f4f4f4 #505050; }

.picker {
  height: 23px;
  margin: 9px 0 0 3px;
  flex: none;
  box-sizing: border-box;
  display: flex;
  align-items: center;
  gap: 6px;
  padding: 0 6px 0 5px;
  background: #fff;
  border: 1px solid #b8b8b8;
  font-size: 12px;
}
.swatch { width: 16px; height: 13px; background: #0000f0; border: 1px solid #102; box-sizing: border-box; border-radius: 1px; }

.grid-box {
  height: 440px;
  margin: 7px 0 0 3px;
  flex: none;
  box-sizing: border-box;
  border: 1px solid #a8a8a8;
  display: flex;
  background: #fff;
  overflow: hidden;
}
.grid-main { flex: 1; min-width: 0; padding-left: 1px; }
.grid-head {
  height: 21px;
  display: flex;
  background: #f0f0f0;
  border-bottom: 1px solid #111;
}
.gh-left {
  width: 163px;
  flex: none;
  display: flex;
  align-items: center;
  gap: 3px;
  padding-left: 2px;
  box-sizing: border-box;
  border-right: 1px solid #111;
}
.box {
  width: 9px;
  height: 9px;
  flex: none;
  border: 1px solid #0b6b6b;
  display: inline-flex;
  align-items: center;
  justify-content: center;
  font-style: normal;
  font-size: 10px;
  line-height: 1;
  color: #111;
  background: #fff;
}
.prow {
  height: 21px;
  display: flex;
  box-sizing: border-box;
  border-bottom: 1px solid #b4b4b4;
}
.prow.tall { height: 53px; }
.plabel {
  width: 163px;
  flex: none;
  box-sizing: border-box;
  border-right: 1px solid #b4b4b4;
  padding: 1px 0 0 12px;
  color: #333;
}
.plabel.sub { padding-left: 21px; }
.plabel.head {
  display: flex;
  align-items: center;
  gap: 1px;
  padding: 0 0 2px 2px;
  font-size: 13.700px;
  font-weight: 700;
  color: #111;
}
.plabel.head.sub { padding-left: 11px; }
.pvalue {
  flex: 1;
  position: relative;
  padding: 0 0 0 1px;
  display: flex;
  align-items: flex-start;
  color: #333;
  white-space: nowrap;
}
.pvalue em { color: #8c8c8c; font-size: 13.200px; }
.sk { margin-top: 4px; }
.sk-code { margin-left: 9px; }
.prog { width: 5px; height: 11px; margin-top: 2px; border: 1px solid #111; }
.dots {
  position: absolute;
  right: 0;
  top: 0;
  width: 19px;
  height: 20px;
  padding: 4px 0 0;
  font: 11px "Liberation Sans", sans-serif;
  background: #f0f0f0;
  border: 1px solid;
  border-color: #fff #777 #777 #fff;
}
.grid-scroll {
  width: 19px;
  flex: none;
  background: #f4f4f4;
  display: flex;
  flex-direction: column;
  align-items: center;
  padding: 8px 0 6px;
  box-sizing: border-box;
}
.thumb { width: 14px; height: 17px; margin-top: 4px; background: #cdcdcd; }
.grid-scroll .down, .list-vscroll .down { margin-top: auto; }
.grid-actions { display: flex; gap: 6px; margin: 5px 0 0 5px; }
.grid-actions button {
  width: 74px;
  height: 22px;
  padding: 0;
  background: #f0f0f0;
  border: 1px solid #dcdcdc;
  display: flex;
  align-items: center;
  justify-content: center;
}

.right { flex: 1; min-width: 0; display: flex; flex-direction: column; }
.sheet-top { height: 43px; flex: none; padding: 14px 0 0 8px; box-sizing: border-box; }
.sheet-tools {
  height: 28px;
  display: flex;
  align-items: center;
  gap: 8px;
  background: linear-gradient(#fff, #f4f4f4 35%, #dcdcdc);
}
.sheet-tools .grip { margin-right: 1px; margin-left: 1px; }
.sheet {
  flex: 1;
  min-height: 0;
  background: #fff;
  border-top: 1px solid #a8a8a8;
  border-left: 1px solid #a8a8a8;
  margin-left: 7px;
  overflow: hidden;
}
.drawing { display: block; }
.status {
  height: 28px;
  flex: none;
  box-sizing: border-box;
  border-top: 2px solid #d8d8d8;
  border-bottom: 1px solid #a8a8a8;
  display: flex;
  align-items: center;
  gap: 5px;
  padding-left: 133px;
  font-size: 11.700px;
}
.status span { color: #222; }
.st-a, .st-b { width: 1px; height: 22px; background: #ccc; }
.st-a { margin-right: 122px; }
.st-b { margin-right: 0; }

.cmdbar {
  height: 33px;
  flex: none;
  display: flex;
  align-items: center;
  padding: 0 0 3px 7px;
  gap: 2px;
  box-sizing: border-box;
}
.f {
  height: 18px;
  flex: none;
  box-sizing: border-box;
  padding: 0 3px;
  border: 1px solid #b8b8b8;
  background: #fff;
  color: #222;
  font: 12px "Liberation Sans", sans-serif;
  outline: none;
}
.flat { border-width: 1px 0 0 0; background: #f8f8f8; }
.w31 { width: 31px; }
.w38 { width: 38px; }
.w42 { width: 42px; }
.w44 { width: 44px; margin-left: 6px; }
.w47 { width: 47px; }
.w53 { width: 53px; margin-right: 3px; }
.ci { flex: none; margin: 0 1px; }
.ci.end { margin-left: 7px; }
.foot {
  flex: 1;
  border-top: 1px solid #a8a8a8;
  background: #f4f4f4;
}

.float {
  position: absolute;
  left: 761px;
  top: 59px;
  width: 1115px;
  height: 727px;
  box-sizing: border-box;
  background: #b3a192;
  border: 1px solid #7f7468;
  display: flex;
  flex-direction: column;
}
.float-title {
  height: 30px;
  flex: none;
  position: relative;
  display: flex;
  align-items: center;
  justify-content: center;
  font-size: 14px;
  color: #333;
}
.float-icon { position: absolute; left: 11px; top: 8px; }
.float-btns {
  position: absolute;
  right: 6px;
  top: 0;
  display: flex;
  align-items: flex-start;
  gap: 17px;
}
.float-btns > svg { margin-top: 7px; }
.float-close {
  width: 45px;
  height: 20px;
  margin-left: -9px;
  background: #c75050;
  display: flex;
  align-items: center;
  justify-content: center;
}
.float-body {
  flex: 1;
  min-height: 0;
  margin: 0 7px 5px;
  background: #f0f0f0;
  display: flex;
  flex-direction: column;
}
.float-tools {
  height: 33px;
  flex: none;
  display: flex;
  align-items: center;
  gap: 7px;
  padding-left: 6px;
  background: linear-gradient(#fff, #f6f6f6 40%, #e0e0e0);
}
.nav { width: 12px; height: 11px; margin: 0 4px; }
.list-wrap {
  height: 613px;
  flex: none;
  margin: 0 2px;
  display: flex;
  background: #fff;
  border-top: 1px solid #a0a0a0;
  overflow: hidden;
}
.list-main { flex: 1; min-width: 0; }
.list-cols {
  display: grid;
  grid-template-columns: 323px 116px 313px 76px 1fr;
}
.list-head {
  height: 24px;
  align-items: center;
  color: #333;
  font-size: 13.300px;
}
.list-head span {
  padding: 2px 0 0 7px;
  height: 100%;
  box-sizing: border-box;
  display: flex;
  align-items: center;
  border-right: 1px solid #e4e4e4;
}
.list-head span:first-child { padding-left: 9px; }
.list-rows { height: 588px; overflow: hidden; }
.list-row {
  height: 21px;
  align-items: center;
  position: relative;
  z-index: 0;
  font-size: 12.500px;
  color: #222;
  white-space: nowrap;
}
.list-row.sel::before {
  content: "";
  position: absolute;
  left: 62px;
  right: 0;
  top: 0;
  bottom: 0;
  z-index: -1;
  background: #cbe8f6;
  border: 1px dotted #266;
}
.cell { padding-left: 7px; }
.cell.wide { font-size: 13px; }
.ref { display: flex; align-items: center; }
.lv1 { padding-left: 28px; }
.lv2 { padding-left: 49px; }
.lv3 { padding-left: 69px; }
.dot {
  width: 11px;
  height: 8px;
  flex: none;
  margin-right: 8px;
  border-radius: 2px;
  box-sizing: border-box;
}
.dot.blue { background: #0000e0; border: 1px solid #001070; }
.dot.yellow { background: #ffff00; border: 1px solid #444; }
.tree-ic { width: 14px; height: 14px; flex: none; margin-right: 5px; font-family: "Liberation Sans", sans-serif; }
.list-vscroll {
  width: 18px;
  flex: none;
  display: flex;
  flex-direction: column;
  align-items: center;
  padding: 6px 0 7px;
  box-sizing: border-box;
}
.vthumb {
  width: 18px;
  height: 279px;
  margin-top: 221px;
  background: #cdcdcd;
}
.list-hscroll {
  height: 16px;
  flex: none;
  margin: 0 2px;
  display: flex;
  align-items: center;
  gap: 6px;
  padding: 0 11px 0 6px;
  background: #f0f0f0;
  border-bottom: 1px solid #a0a0a0;
}
.hthumb { flex: 1; height: 16px; background: #cdcdcd; margin-right: 6px; }
.float-status {
  flex: 1;
  display: flex;
  align-items: center;
  padding-left: 3px;
  font-size: 12.500px;
  color: #222;
}
.float-status span {
  width: 124px;
  height: 100%;
  display: flex;
  align-items: center;
  border-right: 1px solid #dcdcdc;
}

.marks {
  position: absolute;
  left: 0;
  top: 0;
  pointer-events: none;
  filter: drop-shadow(2px 3px 2px rgba(0, 0, 0, .45));
}
</style>

<style>
body { background: #f0f0f0; }
</style>
